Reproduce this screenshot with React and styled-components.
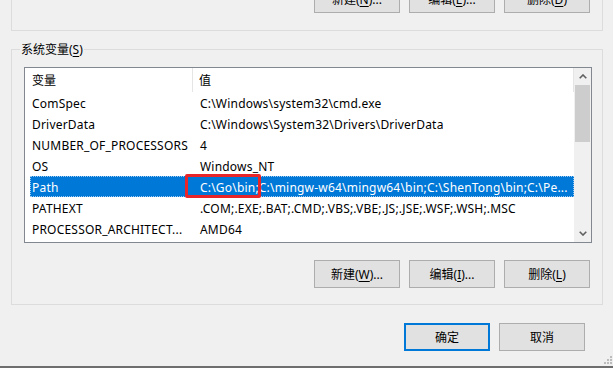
import React from 'react';
import styled, { createGlobalStyle } from 'styled-components';

const GlobalStyle = createGlobalStyle`
  html, body {
    margin: 0;
    padding: 0;
    background: #f0f0f0;
  }
  body {
    font-family: "Noto Sans", "Noto Sans CJK SC", sans-serif;
    font-size: 12px;
    color: #000;
  }
`;

const rows = [
    { name: 'ComSpec', value: 'C:\\Windows\\system32\\cmd.exe' },
    { name: 'DriverData', value: 'C:\\Windows\\System32\\Drivers\\DriverData' },
    { name: 'NUMBER_OF_PROCESSORS', value: '4' },
    { name: 'OS', value: 'Windows_NT' },
    { name: 'Path', value: 'C:\\Go\\bin;C:\\mingw-w64\\mingw64\\bin;C:\\ShenTong\\bin;C:\\Pe...', selected: true },
    { name: 'PATHEXT', value: '.COM;.EXE;.BAT;.CMD;.VBS;.VBE;.JS;.JSE;.WSF;.WSH;.MSC' },
    { name: 'PROCESSOR_ARCHITECT...', value: 'AMD64' },
];

const Chevron = ({ down }) => (
    <svg width="8" height="5" viewBox="0 0 8 5">
        <path
            d={down ? 'M0.7 0.7 L4 4 L7.3 0.7' : 'M0.7 4.3 L4 1 L7.3 4.3'}
            fill="none"
            stroke="#606060"
            strokeWidth="1.6"
        />
    </svg>
);

const EnvDialog = () => {
    return (
        <>
            <GlobalStyle />
            <Window>
                <TopGroup>
                    <Button>
                        新建(<u>N</u>)...
                    </Button>
                    <Button>
                        编辑(<u>E</u>)...
                    </Button>
                    <Button>
                        删除(<u>D</u>)
                    </Button>
                </TopGroup>

                <Group>
                    <GroupLabel>
                        系统变量(<u>S</u>)
                    </GroupLabel>
                    <List>
                        <Table>
                            <HeaderRow>
                                <HeaderCell $first>变量</HeaderCell>
                                <HeaderCell>值</HeaderCell>
                            </HeaderRow>
                            {rows.map((r) => (
                                <Row key={r.name} $selected={r.selected}>
                                    <NameCell>{r.name}</NameCell>
                                    <ValueCell>{r.value}</ValueCell>
                                </Row>
                            ))}
                        </Table>
                        <Scrollbar>
                            <ScrollArrow>
                                <Chevron />
                            </ScrollArrow>
                            <Thumb />
                            <ScrollSpace />
                            <ScrollArrow>
                                <Chevron down />
                            </ScrollArrow>
                        </Scrollbar>
                    </List>
                    <ButtonRow>
                        <Button>
                            新建(<u>W</u>)...
                        </Button>
                        <Button>
                            编辑(<u>I</u>)...
                        </Button>
                        <Button>
                            删除(<u>L</u>)
                        </Button>
                    </ButtonRow>
                </Group>

                <Footer>
                    <Button $default>确定</Button>
                    <Button>取消</Button>
                </Footer>
                <Spacer />
                <BottomEdge />

                <Highlight />
                <Grip>
                    <svg width="8" height="8" viewBox="0 0 8 8">
                        <rect x="6" y="0" width="2" height="2" fill="#bcbcbc" />
                        <rect x="3" y="3" width="2" height="2" fill="#bcbcbc" />
                        <rect x="6" y="3" width="2" height="2" fill="#bcbcbc" />
                        <rect x="0" y="6" width="2" height="2" fill="#bcbcbc" />
                        <rect x="3" y="6" width="2" height="2" fill="#bcbcbc" />
                        <rect x="6" y="6" width="2" height="2" fill="#bcbcbc" />
                    </svg>
                </Grip>
            </Window>
        </>
    );
};

export default EnvDialog;

const Window = styled.div`
    position: relative;
    width: 613px;
    height: 368px;
    overflow: hidden;
    display: flex;
    flex-direction: column;
    background: #f0f0f0;
`;

const TopGroup = styled.div`
    box-sizing: border-box;
    flex: none;
    height: 61px;
    margin: -30px 10px 0 11px;
    padding: 0 12px 17px 0;
    border: 1px solid #dcdcdc;
    display: flex;
    justify-content: flex-end;
    align-items: flex-end;
    gap: 9px;
`;

const Button = styled.button`
    box-sizing: border-box;
    flex: none;
    width: 86px;
    height: 28px;
    padding: 1px 0 0;
    background: #e1e1e1;
    border: ${(p) => (p.$default ? '2px solid #0078d7' : '1px solid #adadad')};
    border-radius: 0;
    font: inherit;
    color: #000;
    line-height: 1;
    u {
        text-underline-offset: 2px;
    }
`;

const Group = styled.div`
    position: relative;
    box-sizing: border-box;
    flex: none;
    height: 256px;
    margin: 18px 10px 0 11px;
    padding-top: 17px;
    border: 1px solid #dcdcdc;
    display: flex;
    flex-direction: column;
`;

const GroupLabel = styled.div`
    position: absolute;
    top: -8px;
    left: 8px;
    padding: 0 1px;
    line-height: 16px;
    background: #f0f0f0;
    u {
        text-underline-offset: 2px;
    }
`;

const List = styled.div`
    box-sizing: border-box;
    height: 176px;
    margin: 0 10px 0 12px;
    border: 1px solid #828790;
    background: #fff;
    display: flex;
`;

const Table = styled.div`
    flex: 1;
    min-width: 0;
    display: flex;
    flex-direction: column;
`;

const HeaderRow = styled.div`
    display: grid;
    grid-template-columns: 168px 1fr;
    height: 24px;
`;

const HeaderCell = styled.div`
    box-sizing: border-box;
    padding: 2px 0 0 ${(p) => (p.$first ? '7px' : '6px')};
    line-height: 22px;
    border-right: 1px solid #e5e5e5;
    color: #000;
`;

const Row = styled.div`
    display: grid;
    grid-template-columns: 163px 1fr;
    height: 21px;
    margin-left: 5px;
    white-space: nowrap;
    letter-spacing: 0.2px;
    background: ${(p) => (p.$selected ? '#0078d7' : 'transparent')};
    color: ${(p) => (p.$selected ? '#fff' : '#000')};
    outline: ${(p) => (p.$selected ? '1px dotted #9ccaf0' : 'none')};
    outline-offset: -1px;
`;

const NameCell = styled.div`
    padding: 2px 0 0 2px;
    line-height: 19px;
    overflow: hidden;
`;

const ValueCell = styled.div`
    padding: 2px 0 0 7px;
    line-height: 19px;
    overflow: hidden;
`;

const Scrollbar = styled.div`
    flex: none;
    width: 17px;
    background: #f0f0f0;
    display: flex;
    flex-direction: column;
`;

const ScrollArrow = styled.div`
    flex: none;
    height: 17px;
    display: flex;
    align-items: center;
    justify-content: center;
`;

const Thumb = styled.div`
    flex: none;
    height: 57px;
    margin: 0 1px;
    background: #cdcdcd;
`;

const ScrollSpace = styled.div`
    flex: 1;
`;

const ButtonRow = styled.div`
    display: flex;
    justify-content: flex-end;
    gap: 9px;
    margin-top: 17px;
    padding-right: 12px;
`;

const Footer = styled.div`
    flex: none;
    display: flex;
    justify-content: flex-end;
    gap: 9px;
    margin-top: 18px;
    padding-right: 28px;
`;

const Spacer = styled.div`
    flex: 1;
`;

const BottomEdge = styled.div`
    flex: none;
    height: 2px;
    background: #6e6e6e;
`;

const Highlight = styled.div`
    position: absolute;
    left: 185px;
    top: 174px;
    width: 76px;
    height: 24px;
    box-sizing: border-box;
    border: 3px solid #e8262a;
    border-radius: 2px;
`;

const Grip = styled.div`
    position: absolute;
    right: 1px;
    bottom: 4px;
    line-height: 0;
`;
